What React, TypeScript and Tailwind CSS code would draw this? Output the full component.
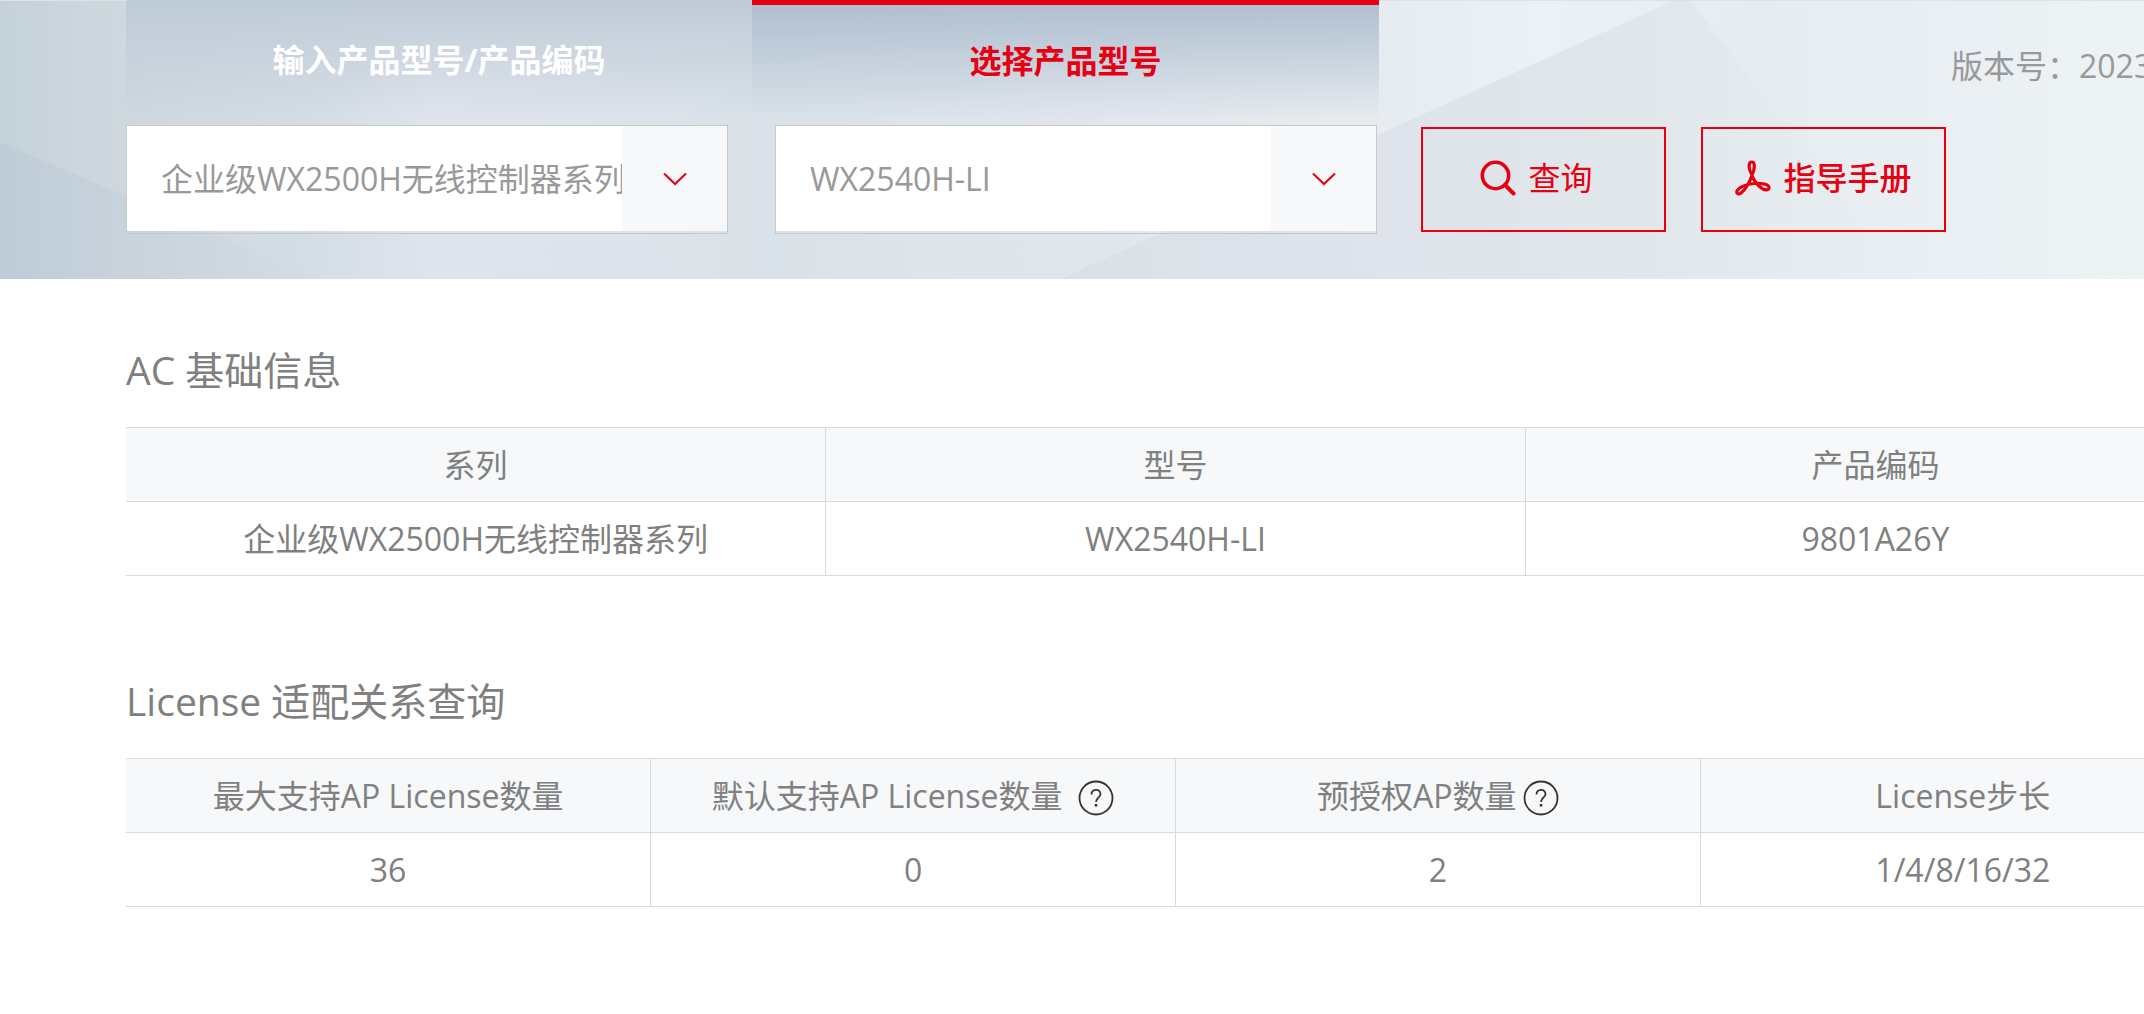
import React from 'react';

const seriesOptions = ['企业级WX2500H无线控制器系列'];
const modelOptions = ['WX2540H-LI'];

function Backdrop() {
  return (
    <svg className="absolute inset-0 -z-10 h-full w-full" viewBox="0 0 2144 279" preserveAspectRatio="none" aria-hidden="true">
      <defs>
        <linearGradient id="base" x1="0" y1="0" x2="1" y2="0">
          <stop offset="0" stopColor="#c5d2da" />
          <stop offset="0.06" stopColor="#cfd8df" />
          <stop offset="0.14" stopColor="#d3dde4" />
          <stop offset="0.2" stopColor="#dfe4ec" />
          <stop offset="0.3" stopColor="#dde3ea" />
          <stop offset="0.36" stopColor="#d9e2e8" />
          <stop offset="0.5" stopColor="#e1e6ed" />
          <stop offset="0.65" stopColor="#e7ecf0" />
          <stop offset="0.72" stopColor="#ebf1f4" />
          <stop offset="0.82" stopColor="#e7ecf1" />
          <stop offset="1" stopColor="#edf2f5" />
        </linearGradient>
        <linearGradient id="low" x1="0" y1="0" x2="1" y2="0">
          <stop offset="0" stopColor="#bfccd7" />
          <stop offset="1" stopColor="#d5dde3" />
        </linearGradient>
        <linearGradient id="ridge" x1="0" y1="0" x2="1" y2="0">
          <stop offset="0" stopColor="#d9e1e7" />
          <stop offset="0.42" stopColor="#dfe4ec" />
          <stop offset="0.7" stopColor="#e2e7eb" />
          <stop offset="1" stopColor="#e9eef2" />
        </linearGradient>
      </defs>
      <rect width="2144" height="279" fill="url(#base)" />
      <path d="M0 142 L320 279 H0Z" fill="url(#low)" />
      <path d="M1060 279 L1675 0 H1690 L1905 279Z" fill="url(#ridge)" />
      <path d="M0 0.5 H2144" stroke="#dde2e8" />
    </svg>
  );
}

function SearchIcon() {
  return (
    <svg className="size-9" viewBox="0 0 36 36" fill="none" stroke="currentColor" aria-hidden="true">
      <circle cx="15.500" cy="15.500" r="13.200" strokeWidth="3.600" />
      <path d="M25 25 L33.500 33.500" strokeWidth="4" strokeLinecap="round" />
    </svg>
  );
}

function PdfIcon() {
  return (
    <svg className="size-9" viewBox="0 0 36 36" fill="none" stroke="currentColor" strokeWidth="3.200" strokeLinejoin="round" aria-hidden="true">
      <path d="M16.500 14 C13 8 13.500 2 16.800 2 C20 2 20 8 17.500 14 C15.500 20 11 29 6 33 C3.500 35 1 33.500 2 31 C3.500 27.500 11 24 19 23.500 C26 23 34 24 34 27.500 C34 31 29 30.500 25 27 C21 23.500 18 19 16.500 14Z" />
    </svg>
  );
}

function HelpButton({ label }: { label: string }) {
  return (
    <button type="button" aria-label={label} className="mt-1 shrink-0 text-[#333]">
      <svg className="size-9" viewBox="0 0 36 36" fill="none" stroke="currentColor" strokeWidth="1.800" aria-hidden="true">
        <circle cx="18" cy="18" r="16.500" />
        <path d="M13.500 14.500 C13.500 8.500 22.500 8.500 22.500 14 C22.500 17.500 18 18 18 22" />
        <path d="M18 24 V26.500" strokeWidth="2.500" />
      </svg>
    </button>
  );
}

function Picker({ label, options }: { label: string; options: string[] }) {
  return (
    <div className="relative h-[109px] w-[602px] shrink-0 border border-[#c8c8c8] pb-0.5">
      <select
        aria-label={label}
        className="block h-full w-full appearance-none bg-white pl-[34px] pr-[105px] text-[32px] text-[#999] outline-none"
      >
        {options.map((option) => (
          <option key={option}>{option}</option>
        ))}
      </select>
      <span className="pointer-events-none absolute top-0 right-0 bottom-0.5 flex w-[105px] items-center justify-center bg-[#f6f8fa] text-[#e60012]">
        <svg className="h-3.5 w-6" viewBox="0 0 24 14" fill="none" stroke="currentColor" strokeWidth="2" aria-hidden="true">
          <path d="M1 1.500 L12 12 L23 1.500" />
        </svg>
      </span>
    </div>
  );
}

type Column = { title: string; help?: boolean; gap?: boolean; value: string };

function InfoTable({ name, columns }: { name: string; columns: Column[] }) {
  return (
    <table aria-label={name} className="w-[97.9vw] table-fixed border-collapse text-[32px] leading-[48px] text-[#808080]">
      <thead>
        <tr className="h-[74px] border-y border-[#d9dadb] bg-[#f6f8fa]">
          {columns.map((c) => (
            <th key={c.title} scope="col" className="border-r border-[#d9dadb] p-0 font-normal last:border-r-0">
              <span className="flex items-center justify-center">
                <span className={c.gap ? 'mr-4' : c.help ? 'mr-1.5' : ''}>{c.title}</span>
                {c.help && <HelpButton label={c.title + '说明'} />}
              </span>
            </th>
          ))}
        </tr>
      </thead>
      <tbody>
        <tr className="h-[74px] border-b border-[#d9dadb]">
          {columns.map((c) => (
            <td key={c.title} className="border-r border-[#d9dadb] p-0 text-center last:border-r-0">
              {c.value}
            </td>
          ))}
        </tr>
      </tbody>
    </table>
  );
}

const basicInfo: Column[] = [
  { title: '系列', value: '企业级WX2500H无线控制器系列' },
  { title: '型号', value: 'WX2540H-LI' },
  { title: '产品编码', value: '9801A26Y' },
];

const licenseInfo: Column[] = [
  { title: '最大支持AP License数量', value: '36' },
  { title: '默认支持AP License数量', value: '0', help: true, gap: true },
  { title: '预授权AP数量', value: '2', help: true },
  { title: 'License步长', value: '1/4/8/16/32' },
];

export default function App() {
  return (
    <div className="overflow-hidden bg-white font-['Open_Sans','Noto_Sans_CJK_SC',sans-serif]">
      <header className="relative isolate h-[279px] pl-[126px] whitespace-nowrap">
        <Backdrop />
        <div className="flex h-[125px] items-start">
          <div role="tablist" className="flex shrink-0 text-[32px] font-bold">
            <button
              type="button"
              role="tab"
              aria-selected="false"
              className="h-[120px] w-[626px] bg-linear-to-b from-[#bfcbd8] to-[#bfcbd8]/0 text-white"
            >
              输入产品型号/产品编码
            </button>
            <button
              type="button"
              role="tab"
              aria-selected="true"
              className="h-[120px] w-[627px] border-t-5 border-[#e60012] bg-linear-to-b from-[#b0bfd0] to-[#b0bfd0]/0 pb-1 text-[#e60012]"
            >
              选择产品型号
            </button>
          </div>
          <p className="ml-[572px] shrink-0 pt-[42px] text-[32px] leading-[48px] text-[#999]">版本号：2023</p>
        </div>
        <form className="flex items-center" onSubmit={(e) => e.preventDefault()}>
          <Picker label="产品系列" options={seriesOptions} />
          <span className="w-[47px] shrink-0" />
          <Picker label="产品型号" options={modelOptions} />
          <button
            type="submit"
            className="ml-11 flex h-[105px] w-[245px] shrink-0 items-center justify-center gap-3 border-2 border-[#e60012] pr-3.5 pb-1 text-[32px] text-[#e60012]"
          >
            <SearchIcon />
            查询
          </button>
          <button
            type="button"
            className="ml-[35px] flex h-[105px] w-[245px] shrink-0 items-center justify-center gap-3 border-2 border-[#e60012] pb-1 text-[32px] font-medium text-[#e60012]"
          >
            <PdfIcon />
            指导手册
          </button>
        </form>
      </header>
      <main className="pl-[126px] text-[#808080]">
        <section className="pt-[61px]">
          <h2 className="mb-[27px] text-[39px] leading-[60px]">AC 基础信息</h2>
          <InfoTable name="AC 基础信息" columns={basicInfo} />
        </section>
        <section className="pt-[95px] pb-[106px]">
          <h2 className="mb-[27px] text-[39px] leading-[60px]">License 适配关系查询</h2>
          <InfoTable name="License 适配关系查询" columns={licenseInfo} />
        </section>
      </main>
    </div>
  );
}
